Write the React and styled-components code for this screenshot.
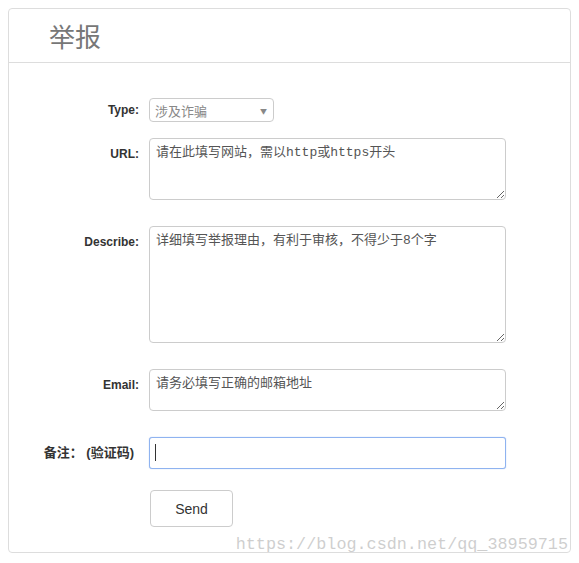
import React from 'react';
import styled, { createGlobalStyle } from 'styled-components';

const GlobalStyle = createGlobalStyle`
  body {
    margin: 8px;
    background: #fff;
    font-family: "Liberation Sans", Arial, "Noto Sans CJK SC", sans-serif;
    color: #333;
  }
`;

const Panel = styled.div`
  position: relative;
  border: 1px solid #ddd;
  border-radius: 4px;
  background: #fff;
`;

const Header = styled.div`
  height: 53px;
  padding-left: 40px;
  border-bottom: 1px solid #ddd;
  display: flex;
  align-items: center;
`;

const Title = styled.h2`
  margin: 0;
  font-family: "Noto Sans CJK SC", sans-serif;
  font-weight: 400;
  font-size: 26px;
  line-height: 1;
  color: #777;
`;

const Form = styled.form`
  display: flex;
  flex-direction: column;
  padding: 35px 0 25px;
`;

const Row = styled.div`
  display: flex;
  align-items: ${p => (p.$center ? 'center' : 'flex-start')};
  gap: 10px;
  margin-bottom: ${p => p.$mb || 26}px;
`;

const Label = styled.label`
  width: 130px;
  flex-shrink: 0;
  box-sizing: border-box;
  text-align: right;
  font-size: 12px;
  font-weight: 700;
  color: #333;
  line-height: 16px;
  padding-top: ${p => (p.$center ? 0 : 8)}px;
  font-family: "Liberation Sans", Arial, "Noto Sans CJK SC", sans-serif;
`;

const CjkLabel = styled(Label)`
  font-family: "Liberation Sans", "Noto Sans CJK SC", sans-serif;
  font-size: 13px;
  padding-right: 5px;
  white-space: pre;
`;

const SelectBox = styled.div`
  position: relative;
  width: 125px;
  height: 24px;
  box-sizing: border-box;
  border: 1px solid #ccc;
  border-radius: 4px;
  display: flex;
  align-items: center;
  padding-left: 5px;
  font-family: "Noto Sans CJK SC", sans-serif;
  font-size: 13px;
  color: #888;
`;

const Arrow = styled.span`
  position: absolute;
  right: 6px;
  top: 7px;
  font-size: 7px;
  color: #888;
`;

const TextArea = styled.textarea`
  display: block;
  width: 357px;
  height: ${p => p.$h}px;
  box-sizing: border-box;
  margin: 0;
  padding: 6px 6px;
  border: 1px solid #ccc;
  border-radius: 4px;
  font-family: "Liberation Mono", "Noto Sans CJK SC", monospace;
  font-size: 13px;
  line-height: 16px;
  color: #555;
  outline: none;
  &::placeholder {
    color: #555;
  }
`;

const Input = styled.input`
  display: block;
  width: 357px;
  height: 32px;
  box-sizing: border-box;
  margin: 0;
  padding: 0 6px;
  border: 1px solid #8fb3f0;
  border-radius: 3px;
  outline: none;
  box-shadow: 0 0 1px #8fb3f0;
  font-size: 14px;
  caret-color: #333;
`;

const Caret = styled.span`
  position: absolute;
  left: 6px;
  top: 7px;
  width: 1px;
  height: 17px;
  background: #333;
`;

const InputWrap = styled.div`
  position: relative;
`;

const Button = styled.button`
  width: 83px;
  height: 37px;
  margin-left: 141px;
  border: 1px solid #ccc;
  border-radius: 4px;
  background: #fff;
  font-family: "Liberation Sans", Arial, sans-serif;
  font-size: 14px;
  color: #333;
`;

const Watermark = styled.div`
  position: absolute;
  right: 2px;
  bottom: -2px;
  font-family: "Liberation Mono", monospace;
  font-size: 16.8px;
  color: rgba(190, 190, 190, 0.75);
  pointer-events: none;
  white-space: nowrap;
`;

export default function App() {
  return (
    <>
      <GlobalStyle />
      <Panel>
        <Header>
          <Title>举报</Title>
        </Header>
        <Form onSubmit={e => e.preventDefault()}>
          <Row $center $mb={16}>
            <Label $center>Type:</Label>
            <SelectBox>
              涉及诈骗
              <Arrow>▼</Arrow>
            </SelectBox>
          </Row>
          <Row>
            <Label>URL:</Label>
            <TextArea $h={62} placeholder="请在此填写网站，需以http或https开头" />
          </Row>
          <Row>
            <Label>Describe:</Label>
            <TextArea $h={117} placeholder="详细填写举报理由，有利于审核，不得少于8个字" />
          </Row>
          <Row>
            <Label>Email:</Label>
            <TextArea $h={42} placeholder="请务必填写正确的邮箱地址" />
          </Row>
          <Row $center $mb={21}>
            <CjkLabel $center>备注： (验证码)</CjkLabel>
            <InputWrap>
              <Input />
              <Caret />
            </InputWrap>
          </Row>
          <Button type="submit">Send</Button>
        </Form>
        <Watermark>https://blog.csdn.net/qq_38959715</Watermark>
      </Panel>
    </>
  );
}
